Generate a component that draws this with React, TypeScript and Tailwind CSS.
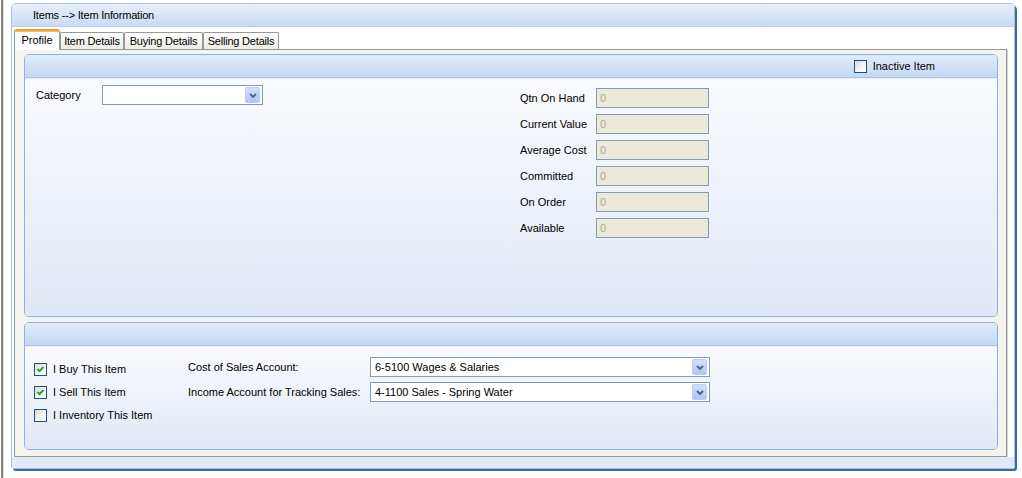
import React from "react";

const font = "font-['Liberation_Sans',Arial,sans-serif]";

const Check = ({ checked }: { checked?: boolean }) => (
  <div className="flex h-[13px] w-[13px] shrink-0 items-center justify-center border border-[#1c5180] bg-gradient-to-br from-[#d9d8d1] via-[#f3f3ef] to-white">
    {checked && (
      <svg width="11" height="11" viewBox="0 0 11 11">
        <polyline
          points="2.5,5 4.5,7.2 8.5,3"
          fill="none"
          stroke="#21a121"
          strokeWidth="1.9"
        />
      </svg>
    )}
  </div>
);

const DropButton = () => (
  <div className="mr-[2px] flex h-[16px] w-[15px] shrink-0 items-center justify-center rounded-[2px] border border-[#b9cdf6] bg-gradient-to-b from-[#d3e0fd] to-[#b0c5f4]">
    <svg width="8" height="5" viewBox="0 0 8 5">
      <polyline
        points="1,1 4,4 7,1"
        fill="none"
        stroke="#4d6185"
        strokeWidth="1.8"
      />
    </svg>
  </div>
);

const Select = ({ value, className }: { value?: string; className: string }) => (
  <div
    className={`flex h-[20px] items-center border border-[#7f9db9] bg-white ${className}`}
  >
    <span className="flex-1 pl-[4px] leading-none">{value}</span>
    <DropButton />
  </div>
);

const ReadOnly = () => (
  <div className="flex h-[20px] w-[113px] items-center border border-[#7f9db9] bg-[#ece9d8] pl-[3px] text-[#aca899]">
    0
  </div>
);

const Panel = ({
  header,
  className,
  children,
}: {
  header?: React.ReactNode;
  className: string;
  children: React.ReactNode;
}) => (
  <div
    className={`flex flex-col overflow-hidden rounded-[5px] border border-[#8cb0e6] ${className}`}
  >
    <div className="flex h-[23px] shrink-0 items-center border-b border-[#a9c5ed] bg-gradient-to-b from-[#e2ebf9] to-[#c4d8f3]">
      {header}
    </div>
    <div className="flex flex-1 border-t border-[#e6eefa] bg-gradient-to-b from-[#f9fafd] to-[#e1e8f5]">
      {children}
    </div>
  </div>
);

const stats = [
  "Qtn On Hand",
  "Current Value",
  "Average Cost",
  "Committed",
  "On Order",
  "Available",
];

const tabs = [
  { label: "Item Details", w: "w-[64px]" },
  { label: "Buying Details", w: "w-[79px]" },
  { label: "Selling Details", w: "w-[76px]" },
];

export default function App() {
  return (
    <div
      className={`flex h-[478px] w-[1022px] items-start overflow-hidden bg-white text-[11px] text-black ${font}`}
    >
      <div className="ml-px h-full w-[2px] bg-[#858580]" />
      <div className="h-full w-px bg-[#dedbd2]" />

      <div className="ml-[7px] mt-[3px] flex h-[466px] w-[1004px] flex-col overflow-hidden rounded-t-[5px] rounded-b-[3px] border border-[#a9c0e4] shadow-[2px_2px_0_#3a69a0]">
        <div className="flex h-[23px] shrink-0 items-center border-b border-[#b6cdee] bg-gradient-to-b from-[#e7eff9] to-[#c9dbf3] pl-[21px] tracking-[-0.2px]">
          Items --&gt; Item Information
        </div>

        <div className="flex flex-1 flex-col bg-white">
          <div className="relative z-10 -mb-px flex h-[23px] items-end pl-[2px]">
            <div className="flex h-[21px] w-[46px] flex-col overflow-hidden rounded-t-[3px] border-x border-[#919b9c] bg-white">
              <div className="h-[3px] bg-gradient-to-b from-[#e68b2c] to-[#ffc73c]" />
              <div className="flex flex-1 items-center justify-center pb-[1px]">
                Profile
              </div>
            </div>
            {tabs.map((t) => (
              <div
                key={t.label}
                className={`mb-px flex h-[17px] items-center justify-center rounded-t-[2px] border border-b-0 border-[#919b9c] bg-gradient-to-b from-white to-[#ecebe4] tracking-[-0.2px] ${t.w}`}
              >
                {t.label}
              </div>
            ))}
          </div>

          <div className="ml-[2px] flex h-[408px] w-[993px] flex-col gap-[5px] border border-[#919b9c] bg-[#f4f3ee] pb-[5px] pl-[9px] pr-[8px] pt-[4px] shadow-[1px_1px_0_#d6d3c6]">
            <Panel
              className="h-[263px]"
              header={
                <div className="ml-auto mr-[62px] flex items-center gap-[6px]">
                  <Check />
                  <span>Inactive Item</span>
                </div>
              }
            >
              <div className="flex w-[495px] items-start pl-[11px] pt-[6px]">
                <div className="flex items-center">
                  <span className="w-[66px]">Category</span>
                  <Select className="w-[161px]" />
                </div>
              </div>
              <div className="flex flex-col gap-[6px] pt-[9px]">
                {stats.map((s) => (
                  <div key={s} className="flex items-center">
                    <span className="w-[76px]">{s}</span>
                    <ReadOnly />
                  </div>
                ))}
              </div>
            </Panel>

            <Panel className="h-[128px]">
              <div className="flex w-[163px] flex-col gap-[10px] pl-[9px] pt-[16px]">
                {[
                  { label: "I Buy This Item", checked: true },
                  { label: "I Sell This Item", checked: true },
                  { label: "I Inventory This Item", checked: false },
                ].map((c) => (
                  <div key={c.label} className="flex h-[13px] items-center gap-[6px]">
                    <Check checked={c.checked} />
                    <span className="whitespace-nowrap">{c.label}</span>
                  </div>
                ))}
              </div>
              <div className="flex flex-col gap-[5px] pt-[10px]">
                <div className="flex items-center">
                  <span className="w-[182px]">Cost of Sales Account:</span>
                  <Select className="w-[340px]" value="6-5100 Wages & Salaries" />
                </div>
                <div className="flex items-center">
                  <span className="w-[182px]">Income Account for Tracking Sales:</span>
                  <Select className="w-[340px]" value="4-1100 Sales - Spring Water" />
                </div>
              </div>
            </Panel>
          </div>

          <div className="flex-1 bg-[#e3eaf6]" />
        </div>
      </div>
    </div>
  );
}
